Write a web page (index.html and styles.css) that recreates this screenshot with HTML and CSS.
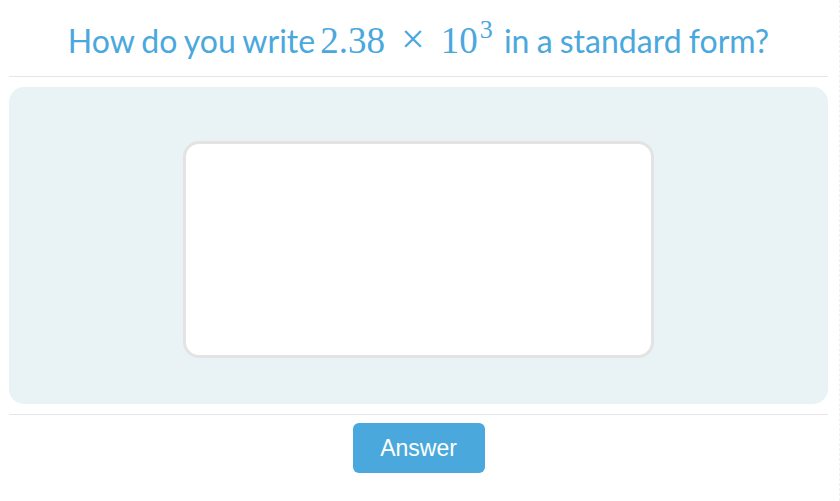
FILE: index.html
```html
<!DOCTYPE html>
<html lang="en">
<head>
    <meta charset="UTF-8">
    <meta name="viewport" content="width=device-width, initial-scale=1.0">
    <title>Standard Form</title>
    <link rel="stylesheet" href="styles.css">
</head>
<body>
    <div class="quiz">
        <h1 class="question">
            How do you write
            <span class="math">2.38<span class="times">&times;</span>10<sup>3</sup></span>
            in a standard form?
        </h1>
        <div class="answer-area">
            <div class="answer-box" contenteditable="true"></div>
        </div>
        <div class="actions">
            <button type="button" class="answer-btn">Answer</button>
        </div>
    </div>
</body>
</html>
```

FILE: styles.css
```css
body {
    margin: 0;
    background: #fff;
    font-family: Lato, "Open Sans", sans-serif;
}
.quiz {
    width: 840px;
    min-height: 501px;
    padding: 0 11px 0 9px;
    border-right: 1px dashed #f0f0f0;
    box-sizing: border-box;
}
.question {
    margin: 0;
    height: 77px;
    box-sizing: border-box;
    padding-top: 21px;
    border-bottom: 1px solid #e6e6e6;
    color: #4aa8dd;
    font-size: 32px;
    font-weight: 400;
    line-height: 40px;
    text-align: center;
    white-space: nowrap;
    word-spacing: -1px;
}
.math {
    font-family: "Liberation Serif", "Times New Roman", serif;
    font-size: 37px;
    margin: 0 4px 0 -2px;
    word-spacing: 0;
}
.times {
    display: inline-block;
    margin: 0 16px;
    font-size: 42px;
    line-height: 0;
}
.math sup {
    font-size: 26px;
    line-height: 0;
    vertical-align: 15px;
    margin-left: 2px;
}
.answer-area {
    margin-top: 10px;
    height: 317px;
    background: #e9f2f5;
    border-radius: 15px;
    display: flex;
    justify-content: center;
    padding-top: 54px;
    box-sizing: border-box;
}
.answer-box {
    width: 471px;
    height: 217px;
    box-sizing: border-box;
    background: #fff;
    border: 3px solid #e3e3e3;
    border-radius: 16px;
    outline: none;
}
.actions {
    margin-top: 10px;
    border-top: 1px solid #e6e6e6;
    padding-top: 8px;
    display: flex;
    justify-content: center;
}
.answer-btn {
    width: 132px;
    height: 50px;
    border: none;
    border-radius: 6px;
    background: #4aa8dc;
    color: #fff;
    font-family: "Liberation Sans", Arial, sans-serif;
    font-size: 23px;
    cursor: pointer;
}
```
